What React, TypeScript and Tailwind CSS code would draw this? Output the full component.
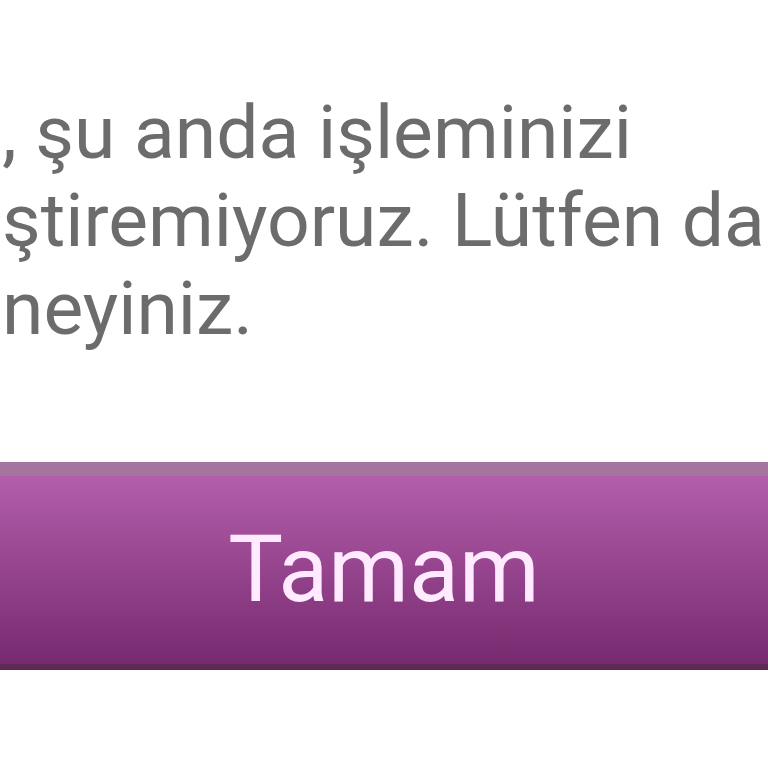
import React from "react";

const lines = [
  { hidden: "Üzgünüz", shown: ", şu anda işleminizi" },
  { hidden: "gerçekle", shown: "ştiremiyoruz. Lütfen daha sonra" },
  { hidden: "tekrar de", shown: "neyiniz." },
];

export default function App() {
  return (
    <div className="w-[768px] h-[768px] overflow-hidden bg-white font-['Roboto',sans-serif]">
      <div className="pt-[88px] text-[75px] leading-[88px] text-[#6c6c6c]">
        {lines.map((line) => (
          <div key={line.shown} className="flex whitespace-nowrap">
            <span className="flex w-0 justify-end">
              <span className="shrink-0">{line.hidden}</span>
            </span>
            <span className="shrink-0 pl-[2px]">{line.shown}</span>
          </div>
        ))}
      </div>
      <button className="mt-[110px] flex h-[208px] w-full items-center justify-center border-t-[14px] border-b-[6px] border-t-[#a5749f] border-b-[#5e2956] bg-gradient-to-b from-[#b35eab] to-[#772a6f] text-[92px] text-[#ffeaff]">
        Tamam
      </button>
    </div>
  );
}
